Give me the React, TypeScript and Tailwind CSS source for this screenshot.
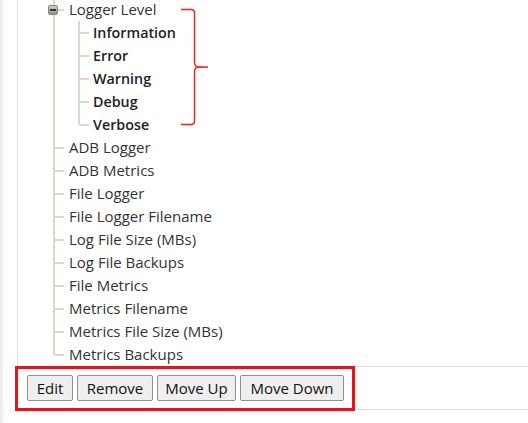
// Settings tree panel with annotated toolbar

const LINE = "bg-[#dcd8cd]"

const levels = ["Information", "Error", "Warning", "Debug", "Verbose"]
const options = [
  "ADB Logger",
  "ADB Metrics",
  "File Logger",
  "File Logger Filename",
  "Log File Size (MBs)",
  "Log File Backups",
  "File Metrics",
  "Metrics Filename",
  "Metrics File Size (MBs)",
  "Metrics Backups",
]

const buttons = [
  { label: "Edit", w: "w-[46px]" },
  { label: "Remove", w: "w-[76px]" },
  { label: "Move Up", w: "w-[79px]" },
  { label: "Move Down", w: "w-[104px]" },
]

function Rail({ last }: { last?: boolean }) {
  return last
    ? <div className={`w-[2px] h-[12px] shrink-0 ${LINE}`} />
    : <div className={`w-[2px] self-stretch shrink-0 ${LINE}`} />
}

function Leaf({ label, last, bold }: { label: string; last?: boolean; bold?: boolean }) {
  return (
    <li className="flex">
      <Rail last={last} />
      <div className="flex items-center h-[23px]">
        <span className={`w-[9px] h-[2px] ${LINE}`} />
        <span
          className={`whitespace-nowrap ${
            bold ? "ml-[4px] text-[14.3px] font-semibold text-[#222]" : "ml-[5px] text-[15px] text-[#333]"
          }`}
        >
          {label}
        </span>
      </div>
    </li>
  )
}

function MinusBox() {
  return (
    <span className="-ml-[7px] w-[10px] h-[10px] rounded-[2px] border border-[#7f8a7d] bg-gradient-to-b from-[#c6d4c0] to-[#869a82] flex items-center justify-center">
      <span className="w-[6px] h-[2px] bg-[#333]" />
    </span>
  )
}

function Brace() {
  return (
    <svg
      className="absolute left-0 top-0 pointer-events-none"
      width="220"
      height="135"
      viewBox="0 0 220 135"
    >
      <path
        d="M181 9.5 L191 9.5 Q194.5 9.5 194.5 13 L194.5 62 Q194.5 66.5 198 66.7 L208 67 L198 67.3 Q194.5 67.5 194.5 72 L194.5 121 Q194.5 124.5 191 124.5 L181 124.5"
        fill="none"
        stroke="#ff1a1a"
        strokeWidth="1.4"
      />
    </svg>
  )
}

export default function App() {
  return (
    <div
      className="relative w-[528px] h-[423px] overflow-hidden bg-white flex"
      style={{ fontFamily: '"Open Sans", "Liberation Sans", sans-serif' }}
    >
      {/* outer gutter */}
      <div className="w-[3px] shrink-0 bg-[#efefef]" />

      <div className="ml-[14px] flex-1 flex flex-col">
        {/* panel */}
        <div className="border-l border-[#dddddd] h-[366px] overflow-hidden">
          <ul className="ml-[35px] -mt-[2px]">
            <li className="flex">
              <Rail />
              <div className="flex flex-col">
                <div className="flex items-center h-[23px]">
                  <MinusBox />
                  <span className={`w-[6px] h-[2px] ${LINE}`} />
                  <span className="ml-[5px] text-[15px] text-[#333]">Logger Level</span>
                </div>
                <ul className="ml-[23px]">
                  {levels.map((l, i) => (
                    <Leaf key={l} label={l} bold last={i === levels.length - 1} />
                  ))}
                </ul>
              </div>
            </li>
            {options.map((o, i) => (
              <Leaf key={o} label={o} last={i === options.length - 1} />
            ))}
          </ul>
        </div>

        {/* toolbar */}
        <div className="relative h-[44px] border-y border-[#dddddd]">
          <div className="absolute -left-[2px] -top-[1px] w-[340px] h-[45px] border-[3px] border-[#e8141c]" />
          <div className="flex gap-[4px] pl-[10px] pt-[8px]">
            {buttons.map((b) => (
              <button
                key={b.label}
                className={`${b.w} h-[26px] text-[15px] text-[#111] bg-[#efefef] border border-[#8f8f8f] rounded-[2px]`}
              >
                {b.label}
              </button>
            ))}
          </div>
        </div>
      </div>

      <Brace />
    </div>
  )
}
